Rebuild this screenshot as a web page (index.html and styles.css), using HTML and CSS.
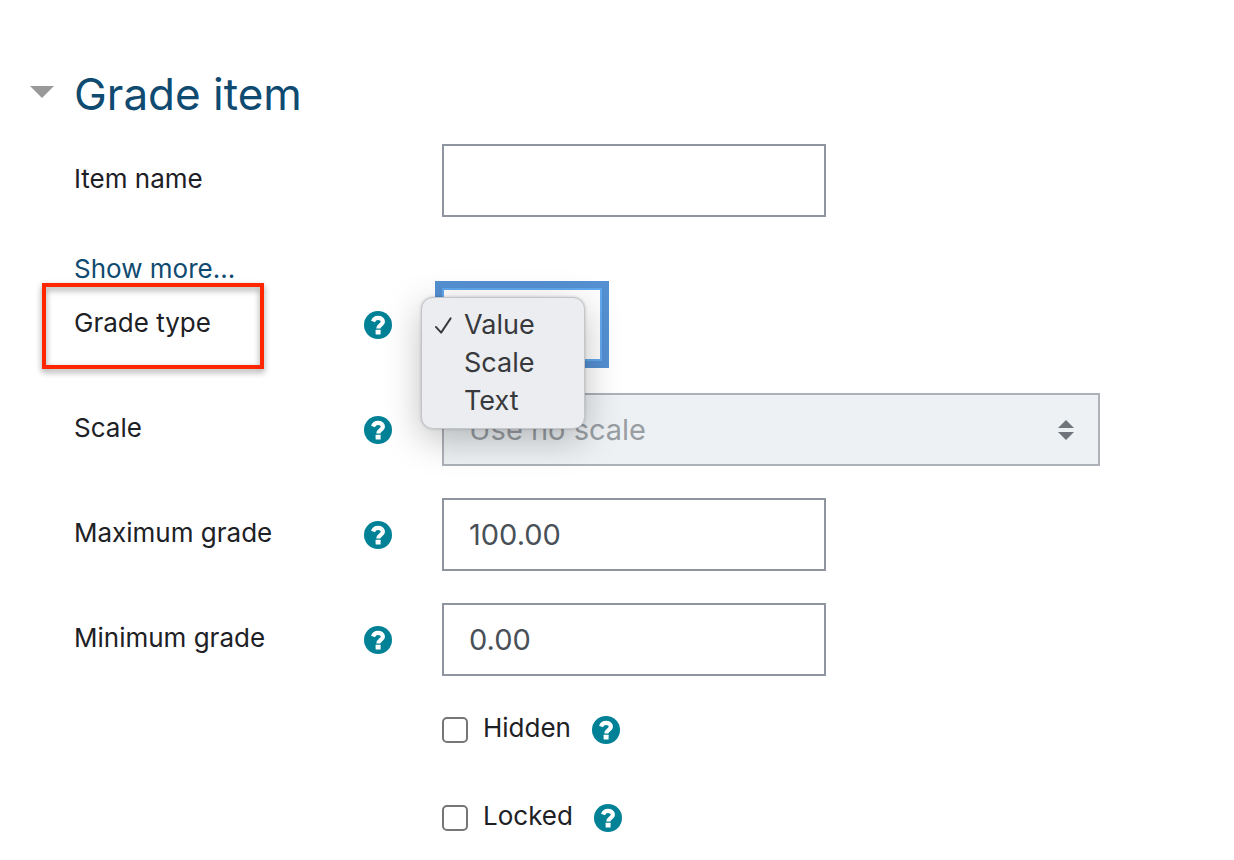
FILE: index.html
```html
<!DOCTYPE html>
<html lang="en">
<head>
  <meta charset="UTF-8" />
  <meta name="viewport" content="width=device-width, initial-scale=1" />
  <title>Grade item</title>
  <link rel="stylesheet" href="styles.css">
</head>
<body>
  <!-- shared help icon -->
  <svg class="sprite" aria-hidden="true">
    <symbol id="help" viewBox="0 0 28 28">
      <circle cx="14" cy="14" r="14" fill="#008196" />
      <path d="M9 10.400C9.900 8 11.500 6.900 14 6.900c2.900 0 4.900 1.500 4.900 3.800 0 3.100-4.500 3.300-4.500 6.700" fill="none" stroke="#fff" stroke-width="4.200" />
      <rect x="11.600" y="18.800" width="5" height="4.600" rx="0.500" fill="#fff" />
    </symbol>
  </svg>

  <form class="grade-form">
    <h1>
      <button type="button" class="toggle" aria-expanded="true" aria-label="Collapse"></button>
      Grade item
    </h1>

    <div class="row">
      <div class="label-col">
        <label for="itemname">Item name</label>
      </div>
      <input class="control" type="text" id="itemname">
    </div>

    <a class="show-more" href="#more">Show more...</a>

    <div class="row">
      <div class="label-col">
        <label for="gradetype">Grade type</label>
        <button type="button" class="help" aria-label="Help with Grade type"><svg><use href="#help" /></svg></button>
        <span class="highlight"></span>
      </div>
      <div class="select-wrap">
        <select class="control type-select" id="gradetype">
          <option selected>Value</option>
          <option>Scale</option>
          <option>Text</option>
        </select>
        <ul class="menu" role="listbox" aria-label="Grade type">
          <li role="option" aria-selected="true">
            <svg class="check" viewBox="0 0 20 20" aria-hidden="true"><path d="M2 11.500l5.500 6L17.500 2.500" /></svg>Value
          </li>
          <li role="option">Scale</li>
          <li role="option">Text</li>
        </ul>
      </div>
    </div>

    <div class="row">
      <div class="label-col">
        <label for="scale">Scale</label>
        <button type="button" class="help" aria-label="Help with Scale"><svg><use href="#help" /></svg></button>
      </div>
      <div class="scale-wrap">
        <select class="control scale-select" id="scale" disabled>
          <option>Use no scale</option>
        </select>
        <svg class="arrows" viewBox="0 0 16 20" aria-hidden="true"><path d="M0 8L8 0l8 8zM0 12h16l-8 8z" /></svg>
      </div>
    </div>

    <div class="row">
      <div class="label-col">
        <label for="grademax">Maximum grade</label>
        <button type="button" class="help" aria-label="Help with Maximum grade"><svg><use href="#help" /></svg></button>
      </div>
      <input class="control" type="text" id="grademax" value="100.00">
    </div>

    <div class="row">
      <div class="label-col">
        <label for="grademin">Minimum grade</label>
        <button type="button" class="help" aria-label="Help with Minimum grade"><svg><use href="#help" /></svg></button>
      </div>
      <input class="control" type="text" id="grademin" value="0.00">
    </div>

    <div class="checks">
      <div class="check-row">
        <input type="checkbox" id="hidden">
        <label for="hidden">Hidden</label>
        <button type="button" class="help" aria-label="Help with Hidden"><svg><use href="#help" /></svg></button>
      </div>
      <div class="check-row">
        <input type="checkbox" id="locked">
        <label for="locked">Locked</label>
        <button type="button" class="help" aria-label="Help with Locked"><svg><use href="#help" /></svg></button>
      </div>
    </div>
  </form>
</body>
</html>
```

FILE: styles.css
```css
*, *::before, *::after {
  box-sizing: border-box;
}
body {
  margin: 0;
  background: #fff;
  color: #1d2125;
  font-family: Inter, "Liberation Sans", sans-serif;
  font-size: 26px;
  line-height: 40px;
}
.sprite {
  position: absolute;
  width: 0;
  height: 0;
}
.grade-form {
  padding: 64px 134px 0 74px;
}
h1 {
  display: flex;
  align-items: center;
  gap: 20px;
  margin: 0 0 20px -44px;
  color: #0f4a70;
  font-size: 44px;
  font-weight: 400;
  line-height: 60px;
}
.toggle {
  width: 24px;
  height: 12px;
  margin-bottom: 4px;
  padding: 0;
  border: none;
  background: #999;
  clip-path: polygon(0 0, 100% 0, 50% 100%);
  cursor: pointer;
}
.row {
  display: grid;
  grid-template-columns: 368px 1fr;
  margin-bottom: 32px;
}
.label-col {
  position: relative;
  display: flex;
  align-items: center;
  justify-content: space-between;
  padding-right: 50px;
}
label {
  padding-bottom: 4px;
}
.help {
  display: block;
  width: 28px;
  height: 28px;
  padding: 0;
  border: none;
  background: none;
  cursor: pointer;
}
.help svg {
  display: block;
  width: 28px;
  height: 28px;
}
.control {
  width: 384px;
  height: 73px;
  padding: 0 25px;
  border: 2px solid #8f959e;
  border-radius: 0;
  background: #fff;
  color: #495057;
  font-family: inherit;
  font-size: 29px;
}
select.control {
  display: block;
  appearance: none;
}
.show-more {
  display: block;
  width: max-content;
  margin: 0 0 -1px;
  color: #0f4a70;
  text-decoration: none;
}
/* annotation frame round the label */
.highlight {
  position: absolute;
  top: -5px;
  left: -32px;
  width: 222px;
  height: 86px;
  border: 4px solid #ff2600;
  filter: drop-shadow(0 3px 3px rgba(0,0,0,0.4));
}
.select-wrap, .scale-wrap {
  position: relative;
}
.control.type-select {
  width: 160px;
  border-color: #62a8ee;
  box-shadow: 0 0 0 7px #5490d2;
}
.control.scale-select {
  width: 100%;
  border-color: #adb1b8;
  background: #edf1f4;
  color: #999ea3;
  opacity: 1;
}
.arrows {
  position: absolute;
  top: 27px;
  right: 26px;
  width: 16px;
  height: 20px;
  fill: #6f757a;
}
.menu {
  position: absolute;
  z-index: 10;
  top: 9px;
  left: -21px;
  width: 164px;
  margin: 0;
  padding: 8px 0;
  border: 1px solid #c3c5c8;
  border-radius: 12px;
  background: #ebedf0;
  box-shadow: 0 10px 36px rgba(0,0,0,0.25), 0 0 3px rgba(0,0,0,0.2);
  list-style: none;
  color: #38393c;
  font-size: 27px;
  line-height: 38px;
}
.menu li {
  position: relative;
  padding-left: 42px;
}
.check {
  position: absolute;
  top: 10px;
  left: 12px;
  width: 19px;
  height: 19px;
  fill: none;
  stroke: #38393c;
  stroke-width: 2;
  stroke-linecap: round;
  stroke-linejoin: round;
}
.checks {
  display: grid;
  gap: 44px;
  padding-left: 368px;
}
.check-row {
  display: flex;
  align-items: center;
}
.check-row input {
  appearance: none;
  width: 26px;
  height: 26px;
  margin: 0 15px 0 0;
  border: 2px solid #767676;
  border-radius: 5px;
  background: #fff;
}
.check-row label {
  margin-right: 21px;
}
```
